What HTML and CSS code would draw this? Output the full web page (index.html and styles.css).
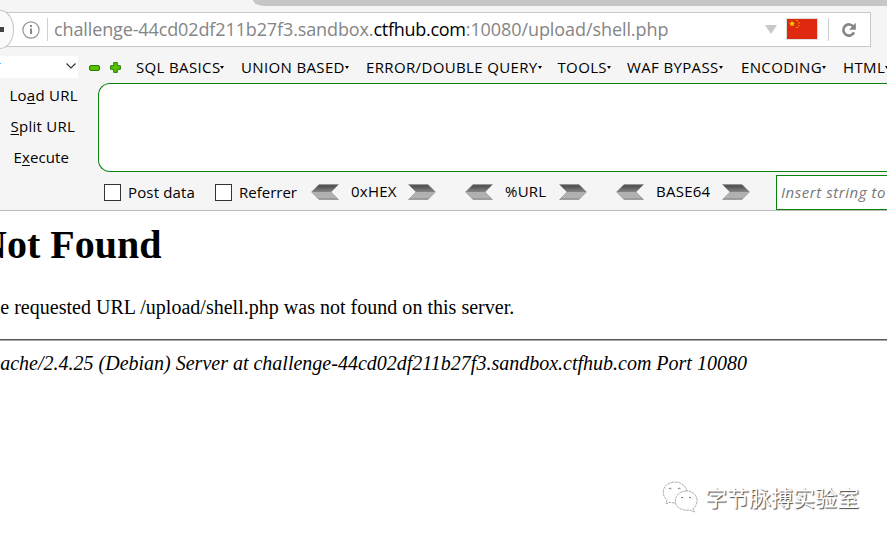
FILE: index.html
```html
<!DOCTYPE html>
<html lang="en">
<head>
<meta charset="utf-8">
<title>404 Not Found</title>
<link rel="stylesheet" href="styles.css">
</head>
<body>
<svg class="defs" width="0" height="0" aria-hidden="true">
  <defs>
    <linearGradient id="metal" x1="0" y1="0" x2="0" y2="1">
      <stop offset="0" stop-color="#666"/><stop offset=".1" stop-color="#505050"/><stop offset=".5" stop-color="#858585"/><stop offset=".52" stop-color="#b0b0b0"/><stop offset=".86" stop-color="#b2b2b2"/><stop offset="1" stop-color="#858585"/>
    </linearGradient>
    <symbol id="right" viewBox="0 0 28 16"><path d="M.5.5H20L27.5 8 20 15.5H.5L8 8Z" fill="url(#metal)" stroke="#777" stroke-opacity=".55" stroke-width=".8"/></symbol>
    <symbol id="left" viewBox="0 0 28 16"><path d="M27.5.5H8L.5 8 8 15.5H27.5L20 8Z" fill="url(#metal)" stroke="#777" stroke-opacity=".55" stroke-width=".8"/></symbol>
  </defs>
</svg>
<header class="chrome">
  <div class="tabstrip"></div>
  <div class="navbar">
    <div class="urlbar">
      <div class="back"><i></i></div>
      <svg class="info" viewBox="0 0 18 18"><circle cx="9" cy="9" r="8.1" fill="none" stroke="#969696" stroke-width="1.2"/><path d="M8 4h2v2H8zM8 7.5h2V13H8z" fill="#888"/></svg>
      <span class="rule first"></span>
      <div class="address"><span class="a1">challenge-44cd02df211b27f3.sandbox.</span><span class="host">ctfhub.com</span><span class="a3">:10080/upload/shell.php</span></div>
      <svg class="drop" viewBox="0 0 12 9"><path d="M0 0h12L6 9z" fill="#c8c8c8"/></svg>
      <svg class="flag" viewBox="0 0 32 22"><path fill="#ddd" d="M0 0h32v22H0z"/><path fill="#de2910" d="M1 1h30v20H1z"/><path fill="#ffde00" d="m6 2.6.8 2.1h2.3L7.3 6.100l.7 2.200L6 7 4 8.300l.7-2.200-1.800-1.400h2.300z"/><g fill="#ee8a0a"><path d="M10 2h2v1h-2zM12 4h1.500v1.400H12zM12 7h1.500v1.300H12zM10 9h2v1h-2z"/></g></svg>
      <span class="rule last"></span>
      <svg class="reload" viewBox="0 0 16 16"><path d="M12.600 4.900A5.600 5.600 0 1 0 13 10.400" fill="none" stroke="#858585" stroke-width="2.600"/><path d="M14.800.8v7H8z" fill="#858585"/></svg>
    </div>
  </div>
  <div class="menus">
    <div class="selector"><i class="trace"></i><svg viewBox="0 0 10 6"><path d="m.5.5 4.500 4.500L9.500.5" fill="none" stroke="#333" stroke-width="1.100"/></svg></div>
    <svg class="minus" viewBox="0 0 11 6"><rect x=".5" y=".5" width="10" height="5" rx="1.500" fill="#58c400" stroke="#267c00"/></svg>
    <svg class="plus" viewBox="0 0 11 11"><path d="M3.700.6h3.600v3.100h3.100v3.600H7.300v3.100H3.700V7.300H.6V3.700h3.100z" fill="#58c400" stroke="#267c00" stroke-linejoin="round"/></svg>
    <nav>
      <span>SQL BASICS</span><span>UNION BASED</span><span>ERROR/DOUBLE QUERY</span><span>TOOLS</span><span>WAF BYPASS</span><span>ENCODING</span><span>HTML</span>
    </nav>
  </div>
  <div class="hackbar">
    <div class="actions"><span class="load">Lo<u>a</u>d URL</span><span class="split"><u>S</u>plit URL</span><span class="exec">E<u>x</u>ecute</span></div>
    <div class="editor"></div>
  </div>
  <div class="options">
    <i class="box"></i><span class="post">Post data</span>
    <i class="box"></i><span class="ref">Referrer</span>
    <div class="codec hex"><svg><use href="#left"/></svg><span>0xHEX</span><svg><use href="#right"/></svg></div>
    <div class="codec url"><svg><use href="#left"/></svg><span>%URL</span><svg><use href="#right"/></svg></div>
    <div class="codec base"><svg><use href="#left"/></svg><span>BASE64</span><svg><use href="#right"/></svg></div>
    <div class="insert"><span>Insert string to</span></div>
  </div>
</header>
<main>
  <h1>Not Found</h1>
  <p>The requested URL /upload/shell.php was not found on this server.</p>
  <hr>
  <address>Apache/2.4.25 (Debian) Server at challenge-44cd02df211b27f3.sandbox.ctfhub.com Port 10080</address>
</main>
<div class="watermark">
  <svg viewBox="0 0 37 32"><g fill="#fff" stroke="#999" stroke-width=".8" stroke-dasharray="3 .6"><path d="M13 22c-2 0-4-.4-5-.8L4 23l1-4C-2 13 1 2 12 1c7-.5 12 4 13 9"/><path d="M24.500 10C17 10 13 15 13.500 21s7 9 14 8l5 2-1.500-3.500C38 23 36 10 24.500 10Z"/></g><path d="M7 8q1-2 2.500 0M16 8q1-2 2.500 0M19 17q1-2 2.200 0M27 17q1-2 2.200 0" fill="none" stroke="#777"/></svg>
  <span>字节脉搏实验室</span>
</div>
</body>
</html>
```
FILE: styles.css
```css
* { box-sizing: border-box; }
body { margin: 0; width: 887px; height: 538px; overflow: hidden; background: #fff; color: #000; }
svg { display: block; flex: none; }
.defs { position: absolute; }
.chrome { height: 211px; background: #f5f5f5; border-bottom: 1px solid #bdbdbd; font: 15px "Open Sans", "Noto Sans", sans-serif; white-space: nowrap; }
.tabstrip { height: 6px; margin-left: 253px; background: #c6c6c6; border-bottom-left-radius: 12px 6px; }
.navbar { height: 50px; padding-top: 6px; }
.urlbar { display: flex; align-items: center; width: 871px; height: 35px; background: #fff; border: 1px solid #c8c8c8; border-left: 0; }
.back { width: 14px; height: 39px; flex: none; background: #fafafa; border: 1px solid #c4c4c4; border-left: 0; border-radius: 0 14px 14px 0 / 0 19px 19px 0; display: flex; align-items: center; }
.back i { width: 4px; height: 5px; background: #444; }
.info { width: 18px; height: 18px; margin-left: 8px; }
.rule { width: 1px; height: 23px; background: #d0d0d0; flex: none; }
.first { margin-left: 7px; }
.address { width: 717px; padding-left: 6px; font-size: 18px; line-height: 30px; color: #858585; display: flex; flex: none; margin-top: -1px; }
.a1 { letter-spacing: -.12px; }
.host { color: #000; letter-spacing: -.27px; }
.a3 { letter-spacing: -.08px; }
.drop { width: 12px; height: 9px; }
.flag { width: 32px; height: 22px; margin-left: 9px; margin-top: -1px; }
.last { margin-left: 10px; }
.reload { width: 16px; height: 16px; margin-left: 12px; }
.menus { display: flex; height: 27px; align-items: center; padding-bottom: 5px; }
.selector { width: 78px; height: 22px; background: #fff; display: flex; align-items: center; justify-content: space-between; padding-right: 2px; flex: none; }
.selector svg { width: 10px; height: 6px; margin-top: -3px; }
.trace { width: 1px; height: 1px; background: #42baf5; margin-top: -8px; }
.minus { width: 11px; height: 6px; margin-left: 11px; margin-top: 1px; }
.plus { width: 11px; height: 11px; margin-left: 10px; margin-top: 1px; }
nav { display: grid; grid-template-columns: 105px 125px 191.5px 69.500px 114px 102px 60px; margin-left: 15px; line-height: 22px; letter-spacing: .36px; margin-top: -1px; }
nav span::after { content: ""; display: inline-block; border: 2.500px solid transparent; border-top: 3px solid #000; border-bottom: 0; vertical-align: 4px; }
.hackbar { display: flex; height: 89px; }
.actions { width: 98px; flex: none; display: flex; flex-direction: column; line-height: 31px; margin-top: -3px; padding-left: 9.500px; letter-spacing: .25px; }
.actions span { display: block; height: 31px; }
.split { padding-left: 1px; }
.exec { padding-left: 4px; letter-spacing: .1px; }
u { text-underline-offset: 2px; text-decoration-thickness: 1px; text-decoration-skip-ink: none; }
.editor { flex: 1; border: 1px solid #08820b; border-right: 0; border-radius: 12px 0 0 12px; background: #fff; }
.options { display: flex; align-items: center; height: 38px; padding: 3px 0 0 104px; }
.options > span, .codec span { margin-top: -2px; }
.box { width: 17px; height: 17px; flex: none; border: 1px solid #333; background: #fff; }
.post { width: 87px; margin-left: 7px; flex: none; letter-spacing: .15px; }
.ref { width: 72px; margin-left: 7px; flex: none; }
.codec { display: grid; grid-template-columns: 28px 1fr 28px; align-items: center; width: 125px; flex: none; margin-top: -2px; }
.codec svg { width: 28px; height: 16px; }
.codec span { padding-left: 12px; letter-spacing: .25px; }
.url { margin-left: 29px; width: 122px; }
.base { margin-left: 29px; width: 134px; }
.insert { align-self: stretch; flex: 1; margin-left: 26px; border: 1px solid #08820b; border-right: 0; background: #fff; overflow: hidden; font-style: italic; color: #777; display: flex; align-items: center; padding-left: 4px; letter-spacing: .55px; }
.insert span { margin-top: -1px; }
main { margin-left: -22px; font: 20px "Liberation Serif", serif; white-space: nowrap; }
h1 { font-size: 40px; line-height: 46px; margin: 11px 0 27px; }
p { line-height: 24px; margin: 0; letter-spacing: .015px; }
hr { margin: 20px 0 10px; border: 0; height: 2px; background: #aaa; border-top: 1px solid #555; }
address { line-height: 24px; }
.watermark { position: absolute; left: 662px; top: 481px; display: flex; align-items: center; font: 22px/34px "Noto Sans CJK SC", sans-serif; color: #fff; text-shadow: 1px 1px 1px #444; }
.watermark svg { width: 37px; height: 32px; margin-right: 6px; }
.watermark span { margin-top: -2px; }
```
